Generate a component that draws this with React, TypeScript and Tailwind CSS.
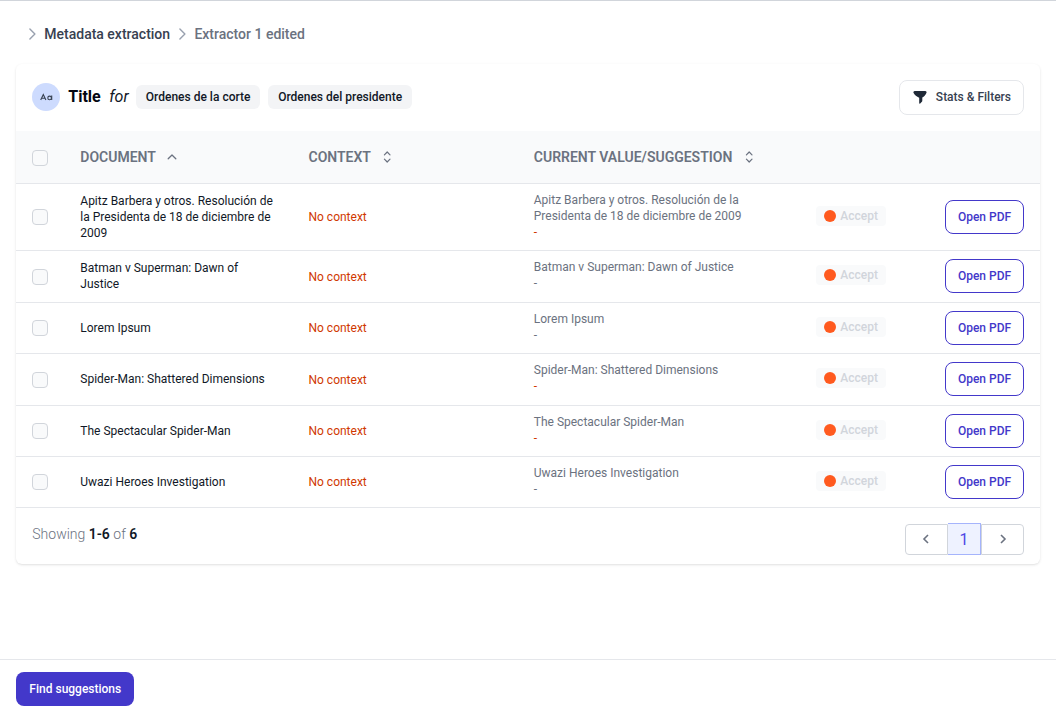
import React from "react";

type Row = {
  title: string;
  height: string;
  mismatch: boolean;
};

const rows: Row[] = [
  { title: "Apitz Barbera y otros. Resolución de la Presidenta de 18 de diciembre de 2009", height: "h-[67px]", mismatch: true },
  { title: "Batman v Superman: Dawn of Justice", height: "h-[52px]", mismatch: false },
  { title: "Lorem Ipsum", height: "h-[51px]", mismatch: false },
  { title: "Spider-Man: Shattered Dimensions", height: "h-[52px]", mismatch: true },
  { title: "The Spectacular Spider-Man", height: "h-[51px]", mismatch: true },
  { title: "Uwazi Heroes Investigation", height: "h-[51px]", mismatch: false },
];

const columns = "grid grid-cols-[64.3px_228.2px_225.3px_282.2px_1fr_auto] pr-4";

function Crumb() {
  return (
    <svg className="h-6 w-6 shrink-0 text-gray-400" viewBox="0 0 24 24" fill="none" stroke="currentColor" strokeWidth="1.4" strokeLinecap="round" strokeLinejoin="round">
      <path d="M9.9 7l5 5-5 5" />
    </svg>
  );
}

function Checkbox() {
  return (
    <span className="ml-4 block h-4 w-4 rounded border border-[#d1d5db] bg-[#f9fafb]" />
  );
}

function SortIcon() {
  return (
    <svg className="h-4 w-4" viewBox="0 0 16 16" fill="none" stroke="currentColor" strokeWidth="1.2" strokeLinecap="round" strokeLinejoin="round">
      <path d="M5.4 5.8L8.2 3 11 5.8M5.4 10.2L8.2 13l2.8-2.8" />
    </svg>
  );
}

export default function App() {
  return (
    <div className="flex h-[718px] w-full flex-col border-t border-[#d1d5db] bg-white font-['Roboto',sans-serif] text-[#111827]">
      <nav className="flex h-[63px] items-center pl-[20.3px] pt-[3px] text-sm font-medium">
        <Crumb />
        <span className="text-[#374151]">Metadata extraction</span>
        <Crumb />
        <span className="pl-[0.3px] text-[#6b7280]">Extractor 1 edited</span>
      </nav>

      <main className="mx-4 flex h-[500px] flex-col overflow-hidden rounded-md shadow-[0_1px_3px_0_rgb(0_0_0/0.1),0_1px_2px_-1px_rgb(0_0_0/0.1)]">
        <header className="flex h-[67px] shrink-0 items-center px-4 pb-px">
          <span className="flex h-7 w-7 items-center justify-center rounded-full bg-[#cddbfe]">
            <svg className="h-3 w-[13px]" viewBox="0 0 13 12" fill="none" stroke="#374151" strokeWidth="1.1">
              <path d="M0.7 9L3.3 3.5 5.9 9M1.6 7.2h3.4" />
              <circle cx="9.6" cy="6.9" r="1.8" />
              <path d="M11.7 4.6V9" />
            </svg>
          </span>
          <h1 className="ml-[8.3px] text-base font-bold leading-6 text-[#030712]">Title</h1>
          <span className="ml-[8.4px] text-base italic">for</span>
          <span className="ml-[7.5px] flex h-6 w-[124px] shrink-0 items-center justify-center rounded-md bg-[#f3f4f6] text-xs font-medium">Ordenes de la corte</span>
          <span className="ml-2 flex h-6 w-[144px] shrink-0 items-center justify-center rounded-md bg-[#f3f4f6] text-xs font-medium">Ordenes del presidente</span>
          <button className="ml-auto flex h-[35px] items-center rounded-lg border border-[#e5e7eb] px-3 text-xs font-medium text-[#374151]">
            <svg className="mr-2 h-4 w-4 text-[#1f2937]" viewBox="0 0 16 16" fill="currentColor">
              <path d="M2.8 2h10.4c1.2 0 1.8 1 1.2 2-1 2-2.300 3.600-4.100 4.600v3.200c0 .4-.1.700-.4 1l-1.700 1.700c-.4.4-1 .2-1-.4V8.700C4.700 7.700 2.700 6 1.600 4 1 3 1.600 2 2.800 2z" />
            </svg>
            Stats &amp; Filters
          </button>
        </header>

        <div className={`${columns} h-[53px] shrink-0 items-center border-b border-[#e5e7eb] bg-[#f9fafb] text-sm font-semibold text-[#6b7280]`}>
          <div className="pt-px"><Checkbox /></div>
          <span className="flex items-center gap-2">
            DOCUMENT
            <svg className="h-4 w-4" viewBox="0 0 16 16" fill="none" stroke="currentColor" strokeWidth="1.3" strokeLinecap="round" strokeLinejoin="round">
              <path d="M4.2 9.8L8 6l3.8 3.8" />
            </svg>
          </span>
          <span className="flex items-center gap-2">CONTEXT<SortIcon /></span>
          <span className="flex items-center gap-[8.5px]">CURRENT VALUE/SUGGESTION<SortIcon /></span>
        </div>

        {rows.map((row) => (
          <div key={row.title} className={`${columns} ${row.height} shrink-0 items-center border-b border-[#e5e7eb] text-xs`}>
            <Checkbox />
            <span className="pb-[0.5px] pr-8">{row.title}</span>
            <span className="text-[#d03801]">No context</span>
            <div className="self-start pr-16 pt-2 text-[#6b7280]">
              <p>{row.title}</p>
              <p className={row.mismatch ? "text-[#d03801]" : ""}>-</p>
            </div>
            <div className="mb-[2.5px] flex h-5 w-[70px] items-center gap-1 rounded bg-[#f9fafb] pl-2 font-medium text-[#d1d5db]">
              <span className="h-3 w-3 rounded-full bg-[#ff5a1f]" />
              <span className="pl-[0.3px]">Accept</span>
            </div>
            <button className="mb-[0.5px] h-[34px] w-[79px] rounded-lg border border-[#4338ca] font-medium text-[#4338ca]">Open PDF</button>
          </div>
        ))}

        <footer className="flex flex-1 items-start justify-between pl-[16.3px] pr-4">
          <p className="pt-4 text-sm font-light text-[#6b7280]">
            Showing <b className="font-semibold text-[#111827]">1-6</b> of <b className="font-semibold text-[#111827]">6</b>
          </p>
          <div className="mt-[15px] flex h-8 w-[119px] items-end text-[#6b7280]">
            <button className="flex h-[31px] w-[43px] items-center justify-center rounded-l border border-[#d1d5db] pb-px pr-px">
              <svg className="h-4 w-4" viewBox="0 0 16 16" fill="none" stroke="currentColor" strokeWidth="1.6"><path d="M10 4L6 8l4 4" /></svg>
            </button>
            <span className="flex h-8 w-[33px] items-center justify-center border border-l-0 border-[#a5b4fc] bg-[#eef2ff] pt-px text-base leading-5 text-[#4f46e5]">1</span>
            <button className="flex h-[31px] w-[43px] items-center justify-center rounded-r border border-[#d1d5db] pb-px">
              <svg className="h-4 w-4" viewBox="0 0 16 16" fill="none" stroke="currentColor" strokeWidth="1.6"><path d="M6 4l4 4-4 4" /></svg>
            </button>
          </div>
        </footer>
      </main>

      <div className="mt-auto h-[59px] border-t border-[#e5e7eb] px-4 pt-3">
        <button className="h-[34px] w-[118px] rounded-lg bg-[#4338ca] pl-[0.6px] text-xs font-medium text-white">Find suggestions</button>
      </div>
    </div>
  );
}
